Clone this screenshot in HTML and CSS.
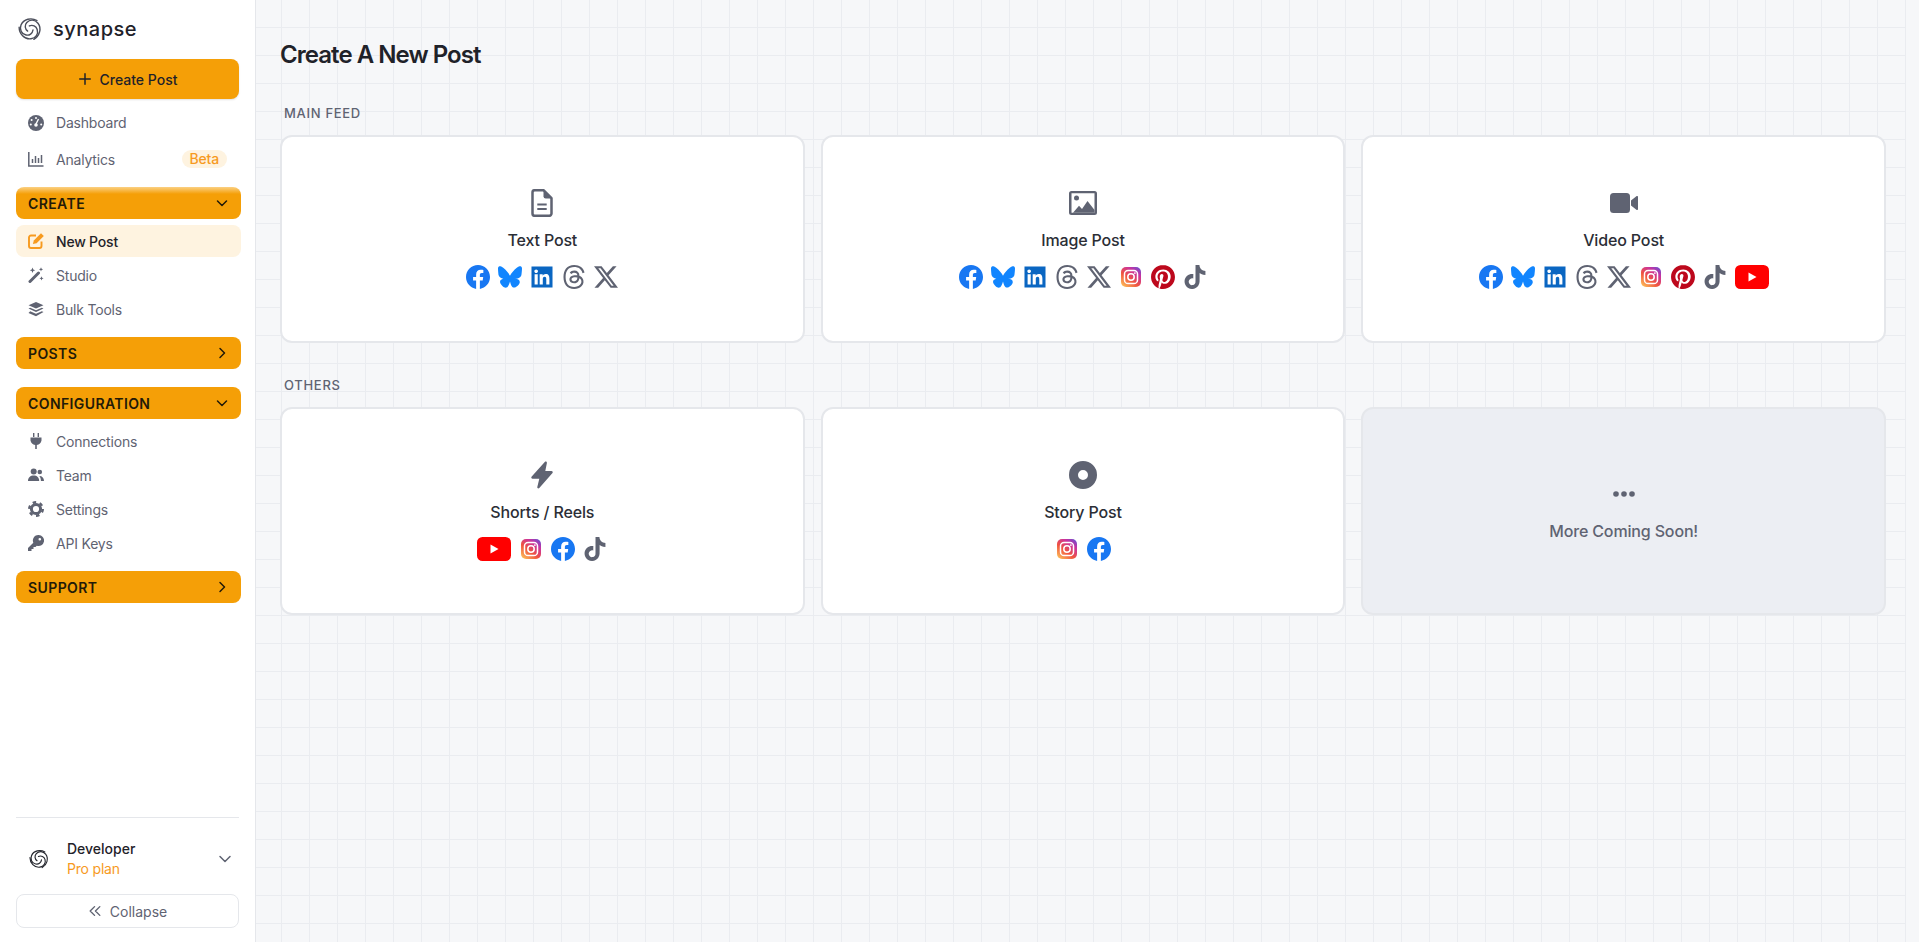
FILE: index.html
```html
<!DOCTYPE html>
<html>
<head>
  <meta charset="UTF-8">
  <title>Create A New Post</title>
  <link rel="stylesheet" href="styles.css">
</head>
<body>
  <!-- Iconos reutilizables -->
  <svg class="defs" width="0" height="0">
    <defs>
      <linearGradient id="ig" x1="0.1" y1="1" x2="0.9" y2="0">
        <stop offset="0" stop-color="#fdc15a"/>
        <stop offset="0.4" stop-color="#f0543f"/>
        <stop offset="0.75" stop-color="#c9329f"/>
        <stop offset="1" stop-color="#6a4fd0"/>
      </linearGradient>
      <symbol id="i-logo" viewBox="0 0 24 24">
        <g fill="none" stroke="currentColor" stroke-width="1.400" stroke-linecap="round">
          <path id="petal" d="M19 3.500C13.500.3 5.500 1.800 3 8c-1.800 4.500.5 9 5 10 3.500.8 6.500-1.500 7-5"/>
          <use href="#petal" transform="rotate(120 12 12)"/>
          <use href="#petal" transform="rotate(240 12 12)"/>
        </g>
      </symbol>
      <symbol id="i-fb" viewBox="0 0 24 24">
        <path fill="#1877f2" d="M24 12.073c0-6.627-5.373-12-12-12s-12 5.373-12 12c0 5.99 4.388 10.954 10.125 11.854v-8.385H7.078v-3.47h3.047V9.43c0-3.007 1.792-4.669 4.533-4.669 1.312 0 2.686.235 2.686.235v2.953H15.83c-1.491 0-1.956.925-1.956 1.874v2.25h3.328l-.532 3.47h-2.796v8.385C19.612 23.027 24 18.062 24 12.073z"/>
      </symbol>
      <symbol id="i-bsky" viewBox="0 0 24 24">
        <path fill="#1185fe" d="M12 10.8c-1.087-2.114-4.046-6.053-6.798-7.995C2.566.944 1.561 1.266.902 1.565.139 1.908 0 3.08 0 3.768c0 .69.378 5.65.624 6.479.815 2.736 3.713 3.66 6.383 3.364.136-.02.275-.039.415-.056-.138.022-.276.04-.415.056-3.912.58-7.387 2.005-2.83 7.078 5.013 5.19 6.87-1.113 7.823-4.308.953 3.195 2.05 9.271 7.733 4.308 4.267-4.308 1.172-6.498-2.74-7.078a8.741 8.741 0 0 1-.415-.056c.14.017.279.036.415.056 2.67.297 5.568-.628 6.383-3.364.246-.828.624-5.79.624-6.479 0-.688-.139-1.86-.902-2.203-.659-.299-1.664-.621-4.3 1.24C16.046 4.748 13.087 8.687 12 10.8Z"/>
      </symbol>
      <symbol id="i-li" viewBox="-1.7 -1.7 27.4 27.4">
        <path fill="#0a66c2" d="M20.447 20.452h-3.554v-5.569c0-1.328-.027-3.037-1.852-3.037-1.853 0-2.136 1.445-2.136 2.939v5.667H9.351V9h3.414v1.561h.046c.477-.9 1.637-1.85 3.37-1.85 3.601 0 4.267 2.37 4.267 5.455v6.286zM5.337 7.433c-1.144 0-2.063-.926-2.063-2.065 0-1.138.92-2.063 2.063-2.063 1.14 0 2.064.925 2.064 2.063 0 1.139-.925 2.065-2.064 2.065zm1.782 13.019H3.555V9h3.564v11.452zM24 0H0v24h24z"/>
      </symbol>
      <symbol id="i-threads" viewBox="0 0 24 24">
        <path fill="#5f6372" d="M12.186 24h-.007c-3.581-.024-6.334-1.205-8.184-3.509C2.35 18.44 1.5 15.586 1.472 12.01v-.017c.03-3.579.879-6.43 2.525-8.482C5.845 1.205 8.6.024 12.18 0h.014c2.746.02 5.043.725 6.826 2.098 1.677 1.29 2.858 3.13 3.509 5.467l-2.04.569c-1.104-3.96-3.898-5.984-8.304-6.015-2.91.022-5.11.936-6.54 2.717C4.307 6.504 3.616 8.914 3.589 12c.027 3.086.718 5.496 2.057 7.164 1.43 1.783 3.631 2.698 6.54 2.717 2.623-.02 4.358-.631 5.8-2.045 1.647-1.613 1.618-3.593 1.09-4.798-.31-.71-.873-1.3-1.634-1.75-.192 1.352-.622 2.446-1.284 3.272-.886 1.102-2.14 1.704-3.73 1.79-1.202.065-2.361-.218-3.259-.801-1.063-.689-1.685-1.74-1.752-2.964-.065-1.19.408-2.285 1.33-3.082.88-.76 2.119-1.207 3.583-1.291a13.853 13.853 0 0 1 3.02.142c-.126-.742-.375-1.332-.75-1.757-.513-.586-1.308-.883-2.359-.89h-.029c-.844 0-1.992.232-2.721 1.32L7.734 7.847c.98-1.454 2.568-2.256 4.478-2.256h.044c3.194.02 5.097 1.975 5.287 5.388.108.046.216.094.321.142 1.49.7 2.58 1.761 3.154 3.07.797 1.82.871 4.79-1.548 7.158-1.85 1.81-4.094 2.628-7.277 2.65Zm1.003-11.69c-.242 0-.487.007-.739.021-1.836.103-2.98.946-2.916 2.143.067 1.256 1.452 1.839 2.784 1.767 1.224-.065 2.818-.543 3.086-3.71a10.5 10.5 0 0 0-2.215-.221z"/>
      </symbol>
      <symbol id="i-x" viewBox="0 0 24 24">
        <path fill="#5f6372" d="M18.901 1.153h3.68l-8.04 9.19L24 22.846h-7.406l-5.8-7.584-6.638 7.584H.474l8.6-9.83L0 1.154h7.594l5.243 6.932ZM17.61 20.644h2.039L6.486 3.24H4.298Z"/>
      </symbol>
      <symbol id="i-ig" viewBox="0 0 24 24">
        <rect x="2" y="2" width="20" height="20" rx="5" fill="url(#ig)"/>
        <rect x="5.500" y="5.500" width="13" height="13" rx="3.600" fill="none" stroke="#fff" stroke-width="1.500"/>
        <circle cx="12" cy="12" r="3.200" fill="none" stroke="#fff" stroke-width="1.500"/>
        <circle cx="15.900" cy="8.100" r=".9" fill="#fff"/>
      </symbol>
      <symbol id="i-pin" viewBox="0 0 24 24">
        <path fill="#bd081c" d="M12.017 0C5.396 0 .029 5.367.029 11.987c0 5.079 3.158 9.417 7.618 11.162-.105-.949-.199-2.403.041-3.439.219-.937 1.406-5.957 1.406-5.957s-.359-.72-.359-1.781c0-1.663.967-2.911 2.168-2.911 1.024 0 1.518.769 1.518 1.688 0 1.029-.653 2.567-.992 3.992-.285 1.193.6 2.165 1.775 2.165 2.128 0 3.768-2.245 3.768-5.487 0-2.861-2.063-4.869-5.008-4.869-3.41 0-5.409 2.562-5.409 5.199 0 1.033.394 2.143.889 2.741.099.12.112.225.085.345-.09.375-.293 1.199-.334 1.363-.053.225-.172.271-.401.165-1.495-.69-2.433-2.878-2.433-4.646 0-3.776 2.748-7.252 7.92-7.252 4.158 0 7.392 2.967 7.392 6.923 0 4.135-2.607 7.462-6.233 7.462-1.214 0-2.354-.629-2.758-1.379l-.749 2.848c-.269 1.045-1.004 2.352-1.498 3.146 1.123.345 2.306.535 3.55.535 6.607 0 11.985-5.365 11.985-11.987C23.97 5.39 18.592.026 11.985.026L12.017 0z"/>
      </symbol>
      <symbol id="i-tt" viewBox="0 0 24 24">
        <path fill="#5f6372" d="M12.525.02c1.31-.02 2.61-.01 3.91-.02.08 1.53.63 3.09 1.75 4.17 1.12 1.11 2.7 1.62 4.24 1.79v4.03c-1.44-.05-2.89-.35-4.2-.97-.57-.26-1.1-.59-1.62-.93-.01 2.92.01 5.84-.02 8.75-.08 1.4-.54 2.79-1.35 3.94-1.31 1.92-3.58 3.17-5.91 3.21-1.43.08-2.86-.31-4.08-1.03-2.02-1.19-3.44-3.37-3.65-5.71-.02-.5-.03-1-.01-1.49.18-1.9 1.12-3.72 2.58-4.96 1.66-1.44 3.98-2.13 6.15-1.72.02 1.48-.04 2.96-.04 4.44-.99-.32-2.15-.23-3.02.37-.63.41-1.11 1.04-1.36 1.75-.21.51-.15 1.07-.14 1.61.24 1.64 1.82 3.02 3.5 2.87 1.12-.01 2.19-.66 2.77-1.61.19-.33.4-.67.41-1.06.1-1.79.06-3.57.07-5.36.01-4.03-.01-8.05.02-12.07z"/>
      </symbol>
      <symbol id="i-yt" viewBox="0 0 34 24">
        <rect width="34" height="24" rx="5.500" fill="#ff0000"/>
        <path d="M13.500 7.500v9l8-4.500z" fill="#fff"/>
      </symbol>
    </defs>
  </svg>

  <div class="app">
    <aside class="sidebar">
      <div class="brand">
        <svg class="brand-logo"><use href="#i-logo"/></svg>
        <span>synapse</span>
      </div>

      <button class="create-btn">
        <svg viewBox="0 0 16 16" width="14" height="14"><path d="M8 2v12M2 8h12" stroke="currentColor" stroke-width="1.700" stroke-linecap="round"/></svg>
        Create Post
      </button>

      <a class="nav-item first">
        <svg viewBox="0 0 16 16"><circle cx="8" cy="8" r="8" fill="currentColor"/><path d="M8 9 L10.500 4" stroke="#fff" stroke-width="1.400"/><circle cx="8" cy="3" r="1" fill="#fff"/><circle cx="3.600" cy="5" r="1" fill="#fff"/><circle cx="2.800" cy="9.500" r="1" fill="#fff"/><circle cx="13.200" cy="9.500" r="1" fill="#fff"/><circle cx="8" cy="10" r="1.800" fill="#fff"/></svg>
        Dashboard
      </a>
      <a class="nav-item analytics">
        <svg viewBox="0 0 16 16"><path d="M.8 1v14h14.700" fill="none" stroke="currentColor" stroke-width="1.500"/><path d="M4.500 12V8M7.500 12V5M10.500 12V7M13.500 12V4" stroke="currentColor" stroke-width="1.500"/></svg>
        Analytics
        <span class="beta">Beta</span>
      </a>

      <div class="section-head glow">CREATE
        <svg viewBox="0 0 16 16"><path d="M3.500 6l4.500 4.500L12.500 6" fill="none" stroke="currentColor" stroke-width="1.500" stroke-linecap="round" stroke-linejoin="round"/></svg>
      </div>
      <a class="nav-item active">
        <svg viewBox="0 0 16 16"><path d="M8 2.500H3a2 2 0 0 0-2 2V13a2 2 0 0 0 2 2h8.500a2 2 0 0 0 2-2V8.500" fill="none" stroke="currentColor" stroke-width="1.900"/><path d="M13 .2l2.800 2.800-7.200 7.200-3.700.9.900-3.700z" fill="currentColor"/></svg>
        New Post
      </a>
      <a class="nav-item">
        <svg viewBox="0 0 16 16"><path d="M2 14.500L10.500 6" stroke="currentColor" stroke-width="3" stroke-linecap="round"/><path d="M4.500 .5l.8 1.900 1.900.8-1.900.8-.8 1.900-.8-1.900-1.900-.8 1.900-.8zM13 .2l.6 1.500 1.500.6-1.500.6-.6 1.500-.6-1.500-1.500-.6 1.500-.6zM13.500 9.200l.6 1.500 1.500.6-1.500.6-.6 1.500-.6-1.500-1.500-.6 1.500-.6z" fill="currentColor"/></svg>
        Studio
      </a>
      <a class="nav-item">
        <svg viewBox="0 0 16 16"><path d="M8 .5l7.500 3.300L8 7.100.5 3.800zM2.200 6.300L8 8.800l5.800-2.500 1.700.9L8 10.500.5 7.200zM2.200 9.800L8 12.300l5.800-2.500 1.700.9L8 14.800.5 11.500z" fill="currentColor" transform="translate(0 .4)"/></svg>
        Bulk Tools
      </a>

      <div class="section-head">POSTS
        <svg viewBox="0 0 16 16"><path d="M6 3.500l4.500 4.500L6 12.500" fill="none" stroke="currentColor" stroke-width="1.500" stroke-linecap="round" stroke-linejoin="round"/></svg>
      </div>

      <div class="section-head">CONFIGURATION
        <svg viewBox="0 0 16 16"><path d="M3.500 6l4.500 4.500L12.500 6" fill="none" stroke="currentColor" stroke-width="1.500" stroke-linecap="round" stroke-linejoin="round"/></svg>
      </div>
      <a class="nav-item">
        <svg viewBox="0 0 16 16"><path d="M5 0h1.400v4H5zM9.600 0H11v4H9.600zM2.500 4.500h11v3a5.500 5.500 0 0 1-4.700 4.400V16H7.200v-4.100A5.500 5.500 0 0 1 2.500 7.500z" fill="currentColor"/></svg>
        Connections
      </a>
      <a class="nav-item">
        <svg viewBox="0 0 16 16"><circle cx="5.700" cy="4.500" r="3" fill="currentColor"/><circle cx="11.800" cy="5" r="2.300" fill="currentColor"/><path d="M0 14c0-3.500 2.400-5.500 5.700-5.500s5.500 2 5.500 5.500zM12 14h4c0-3-1.700-5-4.700-5 1 1 1.600 2.700 1.600 5z" fill="currentColor"/></svg>
        Team
      </a>
      <a class="nav-item">
        <svg viewBox="0 0 16 16"><circle cx="8" cy="8" r="4.600" fill="none" stroke="currentColor" stroke-width="3"/><circle cx="8" cy="8" r="6.800" fill="none" stroke="currentColor" stroke-width="2.400" stroke-dasharray="3.500 3.620"/></svg>
        Settings
      </a>
      <a class="nav-item">
        <svg viewBox="0 0 16 16"><path d="M10.500 0a5.500 5.500 0 1 1-1.700 10.700L7.500 12H5.500v2h-2v2H0v-3l5.300-5.300A5.500 5.500 0 0 1 10.500 0zm1.300 3a1.300 1.300 0 1 0 0 2.600 1.300 1.300 0 0 0 0-2.600z" fill="currentColor" fill-rule="evenodd"/></svg>
        API Keys
      </a>

      <div class="section-head">SUPPORT
        <svg viewBox="0 0 16 16"><path d="M6 3.500l4.500 4.500L6 12.500" fill="none" stroke="currentColor" stroke-width="1.500" stroke-linecap="round" stroke-linejoin="round"/></svg>
      </div>

      <div class="sidebar-bottom">
        <div class="account">
          <svg class="account-logo"><use href="#i-logo"/></svg>
          <div class="account-text">
            <div class="account-name">Developer</div>
            <div class="account-plan">Pro plan</div>
          </div>
          <svg class="account-arrow" viewBox="0 0 16 16"><path d="M3 5.500l5 5 5-5" fill="none" stroke="currentColor" stroke-width="1.500" stroke-linecap="round" stroke-linejoin="round"/></svg>
        </div>
        <button class="collapse-btn">
          <svg viewBox="0 0 16 16" width="14" height="14"><path d="M7.500 3L2.500 8l5 5M13.500 3l-5 5 5 5" fill="none" stroke="currentColor" stroke-width="1.600" stroke-linecap="round" stroke-linejoin="round"/></svg>
          Collapse
        </button>
      </div>
    </aside>

    <main class="main">
      <h1>Create A New Post</h1>

      <h2 class="group-title">MAIN FEED</h2>
      <div class="cards">
        <div class="card">
          <svg class="card-icon" viewBox="0 0 28 28"><path d="M4.500 3.500a2.300 2.300 0 0 1 2.300-2.300h8.700l8 8v15.300a2.300 2.300 0 0 1-2.300 2.300H6.800a2.300 2.300 0 0 1-2.300-2.300z" fill="none" stroke="currentColor" stroke-width="2.500" stroke-linejoin="round"/><path d="M15.500 1.500v5.800a2.200 2.200 0 0 0 2.200 2.200h5.800z" fill="currentColor"/><path d="M9.300 15.500h9.400M9.300 20h9.400" stroke="currentColor" stroke-width="2.200"/></svg>
          <div class="card-title">Text Post</div>
          <div class="socials">
            <svg><use href="#i-fb"/></svg><svg><use href="#i-bsky"/></svg><svg><use href="#i-li"/></svg><svg><use href="#i-threads"/></svg><svg><use href="#i-x"/></svg>
          </div>
        </div>
        <div class="card">
          <svg class="card-icon" viewBox="0 0 28 28"><path fill-rule="evenodd" fill="currentColor" d="M2.500 2h23A2.500 2.500 0 0 1 28 4.500v19a2.500 2.500 0 0 1-2.500 2.500h-23A2.500 2.500 0 0 1 0 23.500v-19A2.500 2.500 0 0 1 2.500 2zM2.500 4.200v19.600h23V4.200z"/><circle cx="7.500" cy="9" r="2.500" fill="currentColor"/><path d="M4 23.800l6-7 3 3.200 5.500-8 7 9v2.800z" fill="currentColor"/></svg>
          <div class="card-title">Image Post</div>
          <div class="socials">
            <svg><use href="#i-fb"/></svg><svg><use href="#i-bsky"/></svg><svg><use href="#i-li"/></svg><svg><use href="#i-threads"/></svg><svg><use href="#i-x"/></svg><svg><use href="#i-ig"/></svg><svg><use href="#i-pin"/></svg><svg><use href="#i-tt"/></svg>
          </div>
        </div>
        <div class="card">
          <svg class="card-icon" viewBox="0 0 28 28"><rect x="0" y="4" width="20" height="20" rx="3.500" fill="currentColor"/><path d="M21 11.500l5.400-4.200c.7-.5 1.600 0 1.600.8v11.800c0 .8-.9 1.300-1.600.8L21 16.500z" fill="currentColor"/></svg>
          <div class="card-title">Video Post</div>
          <div class="socials">
            <svg><use href="#i-fb"/></svg><svg><use href="#i-bsky"/></svg><svg><use href="#i-li"/></svg><svg><use href="#i-threads"/></svg><svg><use href="#i-x"/></svg><svg><use href="#i-ig"/></svg><svg><use href="#i-pin"/></svg><svg><use href="#i-tt"/></svg><svg class="yt"><use href="#i-yt"/></svg>
          </div>
        </div>
      </div>

      <h2 class="group-title second">OTHERS</h2>
      <div class="cards">
        <div class="card">
          <svg class="card-icon" viewBox="0 0 28 28"><path d="M17.200.6c.9-.5 1.900.3 1.700 1.300L17.300 10h6.200c1.100 0 1.700 1.200 1 2L11.300 27c-.8.900-2.300.2-2-1l2-8.300H4.600c-1.100 0-1.700-1.200-1.100-2z" fill="currentColor"/></svg>
          <div class="card-title">Shorts / Reels</div>
          <div class="socials">
            <svg class="yt"><use href="#i-yt"/></svg><svg><use href="#i-ig"/></svg><svg><use href="#i-fb"/></svg><svg><use href="#i-tt"/></svg>
          </div>
        </div>
        <div class="card">
          <svg class="card-icon" viewBox="0 0 28 28"><circle cx="14" cy="14" r="9.500" fill="none" stroke="currentColor" stroke-width="9"/></svg>
          <div class="card-title">Story Post</div>
          <div class="socials">
            <svg><use href="#i-ig"/></svg><svg><use href="#i-fb"/></svg>
          </div>
        </div>
        <div class="card soon">
          <svg class="card-icon" viewBox="0 0 28 28"><circle cx="6" cy="14" r="2.800" fill="currentColor"/><circle cx="14" cy="14" r="2.800" fill="currentColor"/><circle cx="22" cy="14" r="2.800" fill="currentColor"/></svg>
          <div class="card-title">More Coming Soon!</div>
        </div>
      </div>
    </main>
  </div>
</body>
</html>
```

FILE: styles.css
```css
:root {
  --amber: #f59f07;
  --grey: #5f6372;
  --text: #1f2229;
  --line: #e5e7eb;
}
* {
  box-sizing: border-box;
}
body {
  margin: 0;
  font-family: 'Inter', 'Liberation Sans', sans-serif;
  color: var(--text);
  background: #f6f7f9;
}
.defs {
  position: absolute;
}
.app {
  display: flex;
  height: 942px;
  overflow: hidden;
}

/* Barra lateral */
.sidebar {
  width: 256px;
  flex: none;
  display: flex;
  flex-direction: column;
  padding: 0 15px 14px 16px;
  background: #fff;
  border-right: 1px solid var(--line);
}
.brand {
  display: flex;
  align-items: center;
  gap: 11px;
  height: 59px;
  padding: 0 0 2px 2px;
  font-size: 20px;
  font-weight: 500;
  letter-spacing: 0.5px;
}
.brand-logo {
  width: 24px;
  height: 24px;
  color: #4b4e5a;
}
.create-btn {
  display: flex;
  align-items: center;
  justify-content: center;
  gap: 8px;
  width: 223px;
  height: 40px;
  flex: none;
  border: none;
  border-radius: 8px;
  background: var(--amber);
  box-shadow: 0 1px 2px rgba(0, 0, 0, 0.12);
  font: 500 14px 'Inter', sans-serif;
  color: var(--text);
}
.nav-item {
  display: flex;
  align-items: center;
  gap: 12px;
  width: 225px;
  height: 34px;
  padding-left: 12px;
  font-size: 14px;
  font-weight: 400;
  letter-spacing: -0.2px;
  color: var(--grey);
  border-radius: 8px;
}
.nav-item svg {
  width: 16px;
  height: 16px;
  flex: none;
}
.nav-item.first {
  height: 37px;
  margin-top: 5px;
}
.nav-item.analytics {
  height: 36px;
  padding-right: 14px;
}
.beta {
  margin-left: auto;
  padding: 0 8px;
  height: 18px;
  line-height: 18px;
  border-radius: 9px;
  background: #fef3e0;
  color: #f79a1e;
  font-size: 14px;
  font-weight: 500;
}
.nav-item.active {
  height: 32px;
  margin: 6px 0 1px;
  background: #fef3e0;
  color: var(--text);
  font-weight: 500;
}
.nav-item.active svg {
  color: #f79a1e;
}
.section-head {
  display: flex;
  align-items: center;
  justify-content: space-between;
  width: 225px;
  height: 32px;
  flex: none;
  padding: 0 11px 0 12px;
  border-radius: 8px;
  background: var(--amber);
  font-size: 14px;
  font-weight: 600;
  letter-spacing: 0.4px;
  color: #221a08;
}
.section-head svg {
  width: 16px;
  height: 16px;
}
.section-head.glow {
  background: linear-gradient(#fbd083 0, var(--amber) 7px);
}
.nav-item + .section-head {
  margin-top: 11px;
}
.nav-item.analytics + .section-head {
  margin-top: 10px;
}
.section-head + .section-head {
  margin-top: 18px;
}
.section-head + .nav-item:not(.active) {
  margin-top: 5px;
}
.sidebar-bottom {
  margin-top: auto;
  border-top: 1px solid var(--line);
  width: 223px;
}
.account {
  display: flex;
  align-items: center;
  height: 76px;
  padding: 5px 6px 0 13px;
}
.account-logo {
  width: 20px;
  height: 20px;
  color: #26282f;
}
.account-text {
  margin-left: 18px;
  flex: 1;
}
.account-name {
  font-size: 14px;
  font-weight: 500;
  line-height: 20px;
}
.account-plan {
  font-size: 14px;
  line-height: 20px;
  letter-spacing: -0.2px;
  color: #f79a1e;
}
.account-arrow {
  width: 16px;
  height: 16px;
  color: var(--grey);
}
.collapse-btn {
  display: flex;
  align-items: center;
  justify-content: center;
  gap: 8px;
  width: 100%;
  height: 34px;
  border: 1px solid var(--line);
  border-radius: 8px;
  background: #fff;
  font: 400 14px 'Inter', sans-serif;
  color: var(--grey);
}

/* Zona principal con cuadrícula; la rejilla se corta antes del borde derecho */
.main {
  flex: 1;
  min-width: 0;
  padding: 0 20px 0 24px;
  border-right: 13px solid #f6f7f9;
  background-color: #f6f7f9;
  background-image:
    linear-gradient(to right, transparent 27px, #eaecf0 27px),
    linear-gradient(to bottom, transparent 27px, #eaecf0 27px);
  background-size: 28px 28px;
  background-position: -2px 0;
  background-clip: padding-box;
}
h1 {
  margin: 0;
  padding-top: 39px;
  font-size: 24px;
  line-height: 32px;
  font-weight: 600;
  letter-spacing: -0.95px;
}
.group-title {
  margin: 32px 0 0;
  padding-left: 4px;
  font-size: 13px;
  line-height: 20px;
  font-weight: 500;
  letter-spacing: 0.7px;
  color: var(--grey);
}
.group-title.second {
  margin-top: 32px;
}
.cards {
  display: grid;
  grid-template-columns: repeat(3, 1fr);
  gap: 16px;
  margin-top: 12px;
}
.card {
  height: 208px;
  display: flex;
  flex-direction: column;
  align-items: center;
  justify-content: center;
  background: #fff;
  border: 2px solid var(--line);
  border-radius: 12px;
  color: var(--grey);
}
.card-icon {
  width: 28px;
  height: 28px;
}
.card-title {
  margin-top: 13px;
  font-size: 16px;
  line-height: 20px;
  font-weight: 500;
  letter-spacing: -0.15px;
  color: #2b2e36;
}
.socials {
  display: flex;
  gap: 8px;
  margin-top: 15px;
}
.socials svg {
  width: 24px;
  height: 24px;
}
.socials svg.yt {
  width: 34px;
}
.card.soon {
  background: #eceef3;
  padding-bottom: 2px;
}
.card.soon .card-title {
  color: var(--grey);
}
```
